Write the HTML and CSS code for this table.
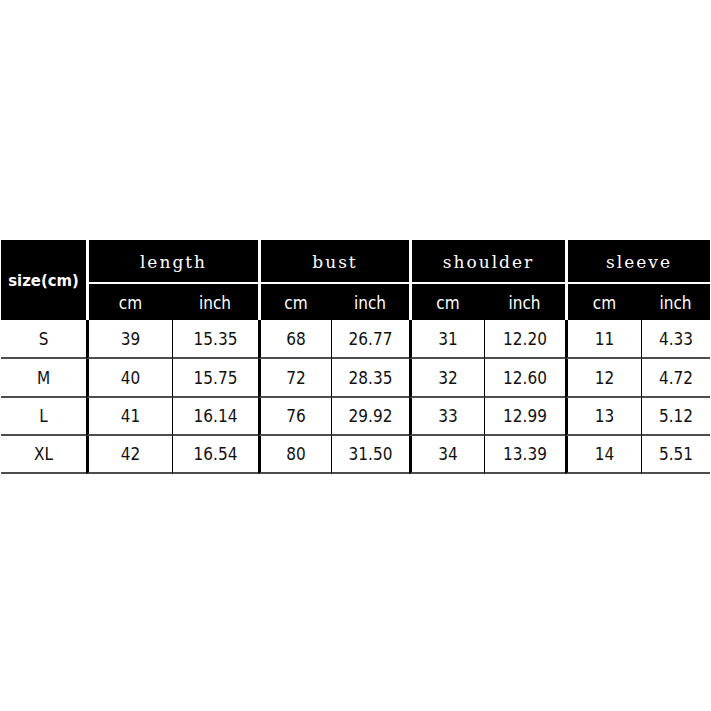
FILE: index.html
```html
<!DOCTYPE html>
<html>
<head>
<meta charset="utf-8">
<link rel="stylesheet" href="styles.css">
</head>
<body>
<div class="page">
  <div class="chart">
    <div class="size">size(cm)</div>
    <div class="grp">length</div>
    <div class="grp">bust</div>
    <div class="grp">shoulder</div>
    <div class="grp">sleeve</div>

    <div class="sub first">cm</div><div class="sub">inch</div>
    <div class="sub first">cm</div><div class="sub">inch</div>
    <div class="sub first">cm</div><div class="sub">inch</div>
    <div class="sub first">cm</div><div class="sub">inch</div>

    <div class="d lead">S</div>
    <div class="d first">39</div><div class="d second">15.35</div>
    <div class="d first">68</div><div class="d second">26.77</div>
    <div class="d first">31</div><div class="d second">12.20</div>
    <div class="d first">11</div><div class="d second">4.33</div>

    <div class="d lead">M</div>
    <div class="d first">40</div><div class="d second">15.75</div>
    <div class="d first">72</div><div class="d second">28.35</div>
    <div class="d first">32</div><div class="d second">12.60</div>
    <div class="d first">12</div><div class="d second">4.72</div>

    <div class="d lead">L</div>
    <div class="d first">41</div><div class="d second">16.14</div>
    <div class="d first">76</div><div class="d second">29.92</div>
    <div class="d first">33</div><div class="d second">12.99</div>
    <div class="d first">13</div><div class="d second">5.12</div>

    <div class="d lead">XL</div>
    <div class="d first">42</div><div class="d second">16.54</div>
    <div class="d first">80</div><div class="d second">31.50</div>
    <div class="d first">34</div><div class="d second">13.39</div>
    <div class="d first">14</div><div class="d second">5.51</div>
  </div>
</div>
</body>
</html>
```
FILE: styles.css
```css
html, body {
  margin: 0;
  padding: 0;
  background: #fff;
}

.page {
  padding: 240px 0 0 1px;
}

.chart {
  display: grid;
  grid-template-columns: 85px 86px 86px 73px 78px 75px 81px 76px 69px;
  grid-template-rows: 42px 38px 39px 39px 38px 38px;
  width: 709px;
  background: #fff;
  font-family: "DejaVu Sans Condensed", "DejaVu Sans", sans-serif;
}

.chart > div {
  box-sizing: border-box;
  display: flex;
  align-items: center;
  justify-content: center;
}

.size {
  grid-row: 1 / 3;
  background: #000;
  color: #fff;
  font-weight: bold;
  font-size: 16.5px;
  padding-top: 1px;
}

.grp {
  grid-column: span 2;
  background: #000;
  color: #fff;
  border-left: 3px solid #fff;
  font-family: "DejaVu Serif", "Liberation Serif", serif;
  font-size: 17px;
  letter-spacing: 2px;
  padding-top: 2px;
}

.sub {
  background: #000;
  color: #fff;
  border-top: 2px solid #fff;
  font-size: 17px;
  padding-top: 2px;
}

.sub.first {
  border-left: 3px solid #fff;
}

.d {
  color: #111;
  font-size: 17px;
  border-bottom: 2px solid #4d4d4d;
}

.d.first {
  border-left: 3px solid #000;
}

.d.second {
  border-left: 1px solid #000;
}
```
